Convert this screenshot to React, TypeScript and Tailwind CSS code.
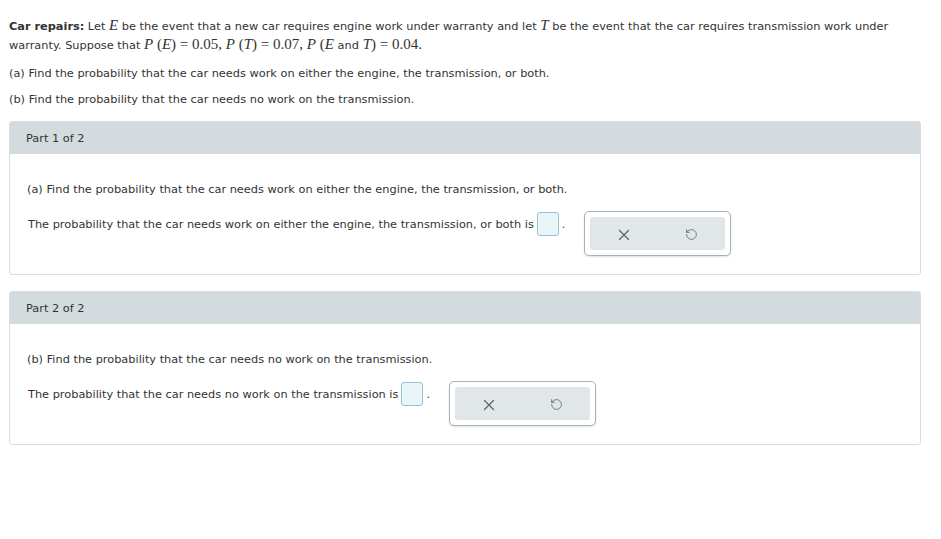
import React from "react";
import { RotateCcw } from "lucide-react";

const M = ({ children }: { children: React.ReactNode }) => (
  <span className="text-[15px] leading-none [font-family:'Liberation_Serif','DejaVu_Serif',serif]">{children}</span>
);
const I = ({ children }: { children: React.ReactNode }) => (
  <span className="italic leading-none [font-family:'Liberation_Serif','DejaVu_Serif',serif] text-[15px]">{children}</span>
);

const XIcon = () => (
  <svg width="12" height="12" viewBox="0 0 12 12" fill="none" stroke="#5b6870" strokeWidth="1.3" strokeLinecap="round">
    <path d="M1.5 1.5 L10.5 10.5 M10.5 1.5 L1.5 10.5" />
  </svg>
);

const Buttons = () => (
  <div className="ml-[19px] mt-[3px] w-[147px] h-[45px] rounded-[5px] border border-[#a9b2b7] bg-white p-[5px] shadow-[0_1px_2px_rgba(0,0,0,0.12)]">
    <div className="flex h-full items-center justify-around rounded-[3px] bg-[#e1e6e9] pt-[2px]">
      <XIcon />
      <RotateCcw size={13} strokeWidth={1.5} color="#5b6870" />
    </div>
  </div>
);

const Input = () => (
  <span className="mx-[3px] inline-block h-[24px] w-[22px] rounded-[3px] border border-[#8fc4d6] bg-[#eaf5f9]" />
);

const Part = ({ title, q, prompt }: { title: string; q: string; prompt: string }) => (
  <div className="rounded-[3px] border border-[#dadde0] bg-white">
    <div className="h-[32px] bg-[#d3dbde] pl-[16px] pt-[9px] leading-[14px]">{title}</div>
    <div className="px-[17px] pt-[28px] pb-[18px]">
      <div className="leading-[14px]">{q}</div>
      <div className="mt-[12px] flex items-start">
        <div className="flex items-center pl-[1px] pt-[4px]">
          <span>{prompt}</span>
          <Input />
          <span>.</span>
        </div>
        <Buttons />
      </div>
    </div>
  </div>
);

export default function App() {
  return (
    <div className="min-h-[539px] bg-white px-[9px] pr-[20px] pt-[17px] text-[11.33px] text-[#333] [font-family:'DejaVu_Sans','Verdana',sans-serif]">
      <p className="leading-[19px]">
        <b>Car repairs:</b> Let <I>E</I> be the event that a new car requires engine work under warranty and let{" "}
        <I>T</I> be the event that the car requires transmission work under warranty. Suppose that{" "}
        <M>
          <I>P</I> (<I>E</I>) = 0.05, <I>P</I> (<I>T</I>) = 0.07, <I>P</I> (<I>E</I>{" "}
          <span className="not-italic text-[11.33px] [font-family:'DejaVu_Sans',sans-serif]">and</span> <I>T</I>) = 0.04.
        </M>
      </p>
      <p className="mt-[11px] leading-[14px]">(a) Find the probability that the car needs work on either the engine, the transmission, or both.</p>
      <p className="mt-[12px] leading-[14px]">(b) Find the probability that the car needs no work on the transmission.</p>
      <div className="mt-[15px]">
        <Part
          title="Part 1 of 2"
          q="(a) Find the probability that the car needs work on either the engine, the transmission, or both."
          prompt="The probability that the car needs work on either the engine, the transmission, or both is"
        />
      </div>
      <div className="mt-[16px]">
        <Part
          title="Part 2 of 2"
          q="(b) Find the probability that the car needs no work on the transmission."
          prompt="The probability that the car needs no work on the transmission is"
        />
      </div>
    </div>
  );
}
